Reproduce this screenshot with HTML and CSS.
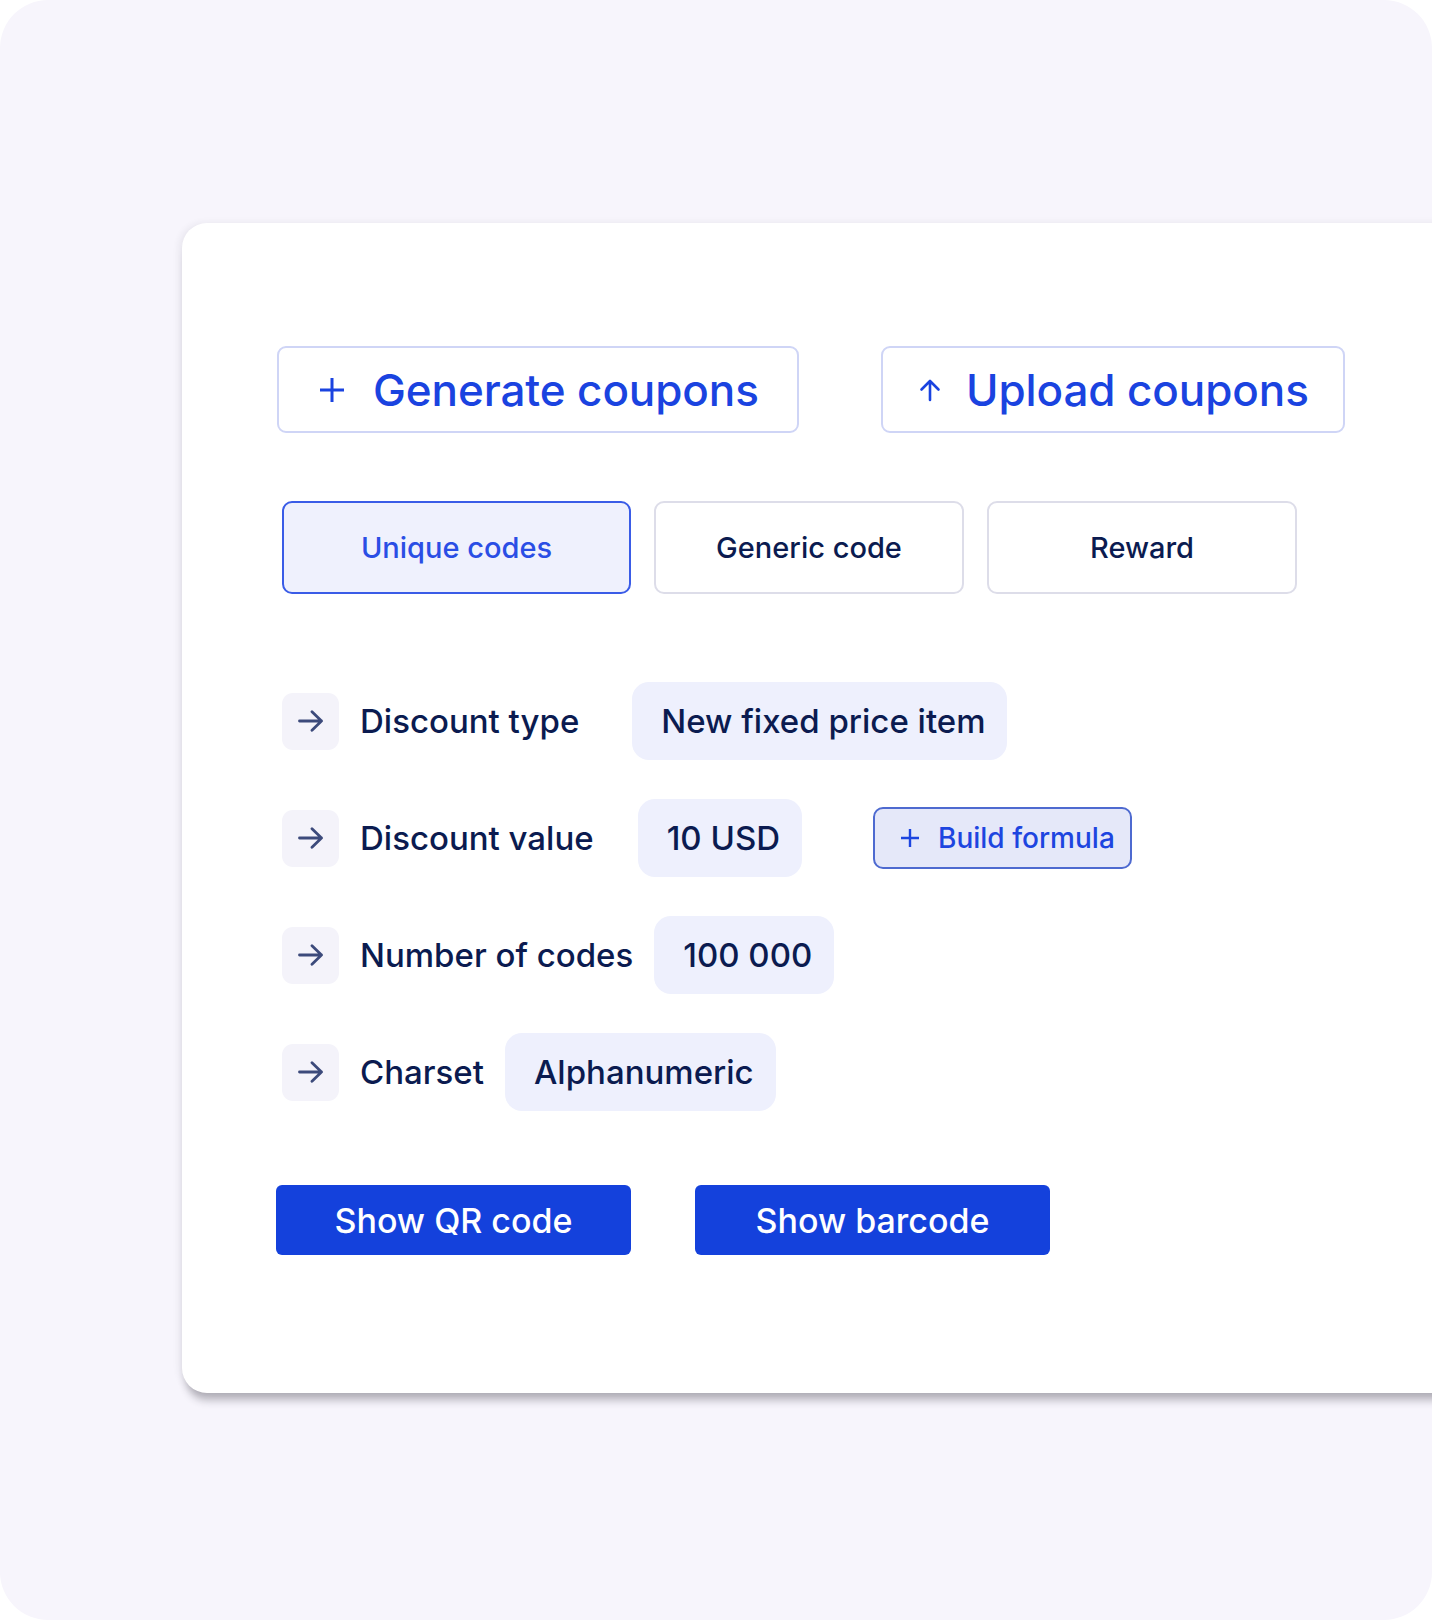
FILE: index.html
```html
<!DOCTYPE html>
<html lang="en">
<head>
<meta charset="utf-8">
<title>Coupons</title>
<link rel="stylesheet" href="styles.css">
</head>
<body>
<div class="frame">
  <div class="card">
    <div class="actions">
      <button class="outline-btn btn-generate">
        <svg class="ico-plus" viewBox="0 0 28 28" width="28" height="28"><path d="M14 2v24M2 14h24" stroke="currentColor" stroke-width="3" fill="none"/></svg>
        <span>Generate coupons</span>
      </button>
      <button class="outline-btn btn-upload">
        <svg class="ico-up" viewBox="0 0 24 24" width="24" height="24"><path d="M12 22V3M3.5 11.5L12 3l8.5 8.5" stroke="currentColor" stroke-width="2.6" fill="none" stroke-linecap="round" stroke-linejoin="round"/></svg>
        <span>Upload coupons</span>
      </button>
    </div>

    <div class="tabs">
      <div class="tab tab-active tab-wide">Unique codes</div>
      <div class="tab">Generic code</div>
      <div class="tab">Reward</div>
    </div>

    <div class="rows">
      <div class="row">
        <span class="arrow-box"><svg viewBox="0 0 26 22" width="26" height="22"><path d="M1.5 11h22M14 1.8l9.5 9.2L14 20.2" stroke="currentColor" stroke-width="2.8" fill="none" stroke-linecap="round" stroke-linejoin="round"/></svg></span>
        <span class="label">Discount type</span>
        <span class="pill gap-a">New fixed price item</span>
      </div>
      <div class="row">
        <span class="arrow-box"><svg viewBox="0 0 26 22" width="26" height="22"><path d="M1.5 11h22M14 1.8l9.5 9.2L14 20.2" stroke="currentColor" stroke-width="2.8" fill="none" stroke-linecap="round" stroke-linejoin="round"/></svg></span>
        <span class="label">Discount value</span>
        <span class="pill gap-b">10 USD</span>
        <button class="formula-btn">
          <svg viewBox="0 0 20 20" width="20" height="20"><path d="M10 1v18M1 10h18" stroke="currentColor" stroke-width="2.4" fill="none"/></svg>
          <span>Build formula</span>
        </button>
      </div>
      <div class="row">
        <span class="arrow-box"><svg viewBox="0 0 26 22" width="26" height="22"><path d="M1.5 11h22M14 1.8l9.5 9.2L14 20.2" stroke="currentColor" stroke-width="2.8" fill="none" stroke-linecap="round" stroke-linejoin="round"/></svg></span>
        <span class="label">Number of codes</span>
        <span class="pill gap-c">100 000</span>
      </div>
      <div class="row">
        <span class="arrow-box"><svg viewBox="0 0 26 22" width="26" height="22"><path d="M1.5 11h22M14 1.8l9.5 9.2L14 20.2" stroke="currentColor" stroke-width="2.8" fill="none" stroke-linecap="round" stroke-linejoin="round"/></svg></span>
        <span class="label">Charset</span>
        <span class="pill gap-c">Alphanumeric</span>
      </div>
    </div>

    <div class="bottom">
      <button class="solid-btn">Show QR code</button>
      <button class="solid-btn">Show barcode</button>
    </div>
  </div>
</div>
</body>
</html>
```

FILE: styles.css
```css
* { box-sizing: border-box; }
html, body { margin: 0; padding: 0; background: #ffffff; }
body { font-family: Inter, "Noto Sans", sans-serif; }

.frame {
  width: 1432px;
  height: 1620px;
  background: #f7f5fc;
  border-radius: 48px;
  overflow: hidden;
  padding: 223px 0 0 182px;
}

.card {
  width: 1300px;
  height: 1170px;
  background: #ffffff;
  border-radius: 25px 0 0 25px;
  box-shadow: 0 12px 9px -5px rgba(40, 36, 50, 0.32), -3px 0 7px rgba(40, 36, 60, 0.07);
  padding: 123px 0 0 95px;
}

button { font-family: inherit; cursor: pointer; }

.actions { display: flex; gap: 82px; }

.outline-btn {
  height: 87px;
  border: 2px solid #cfd5f6;
  border-radius: 9px;
  background: #ffffff;
  color: #1a43e0;
  font-size: 44px;
  font-weight: 500;
  display: flex;
  align-items: center;
  padding: 0;
  letter-spacing: -0.1px;
}
.btn-generate { width: 522px; padding-left: 39px; gap: 27px; }
.btn-upload { width: 464px; padding-left: 35px; gap: 24px; }
.ico-plus { width: 28px; height: 28px; }
.ico-up { width: 24px; height: 24px; }

.tabs { display: flex; gap: 23px; margin: 68px 0 0 5px; }
.tab {
  width: 310px;
  height: 93px;
  border: 2px solid #dddde9;
  border-radius: 10px;
  display: flex;
  align-items: center;
  justify-content: center;
  font-size: 29px;
  font-weight: 500;
  color: #0b1b50;
}
.tab-wide { width: 349px; }
.tab-active {
  background: #eff1fd;
  border-color: #3a5ce7;
  color: #2a4ee5;
}

.rows { display: flex; flex-direction: column; gap: 39px; margin: 88px 0 0 5px; }
.row { display: flex; align-items: center; height: 78px; }

.arrow-box {
  width: 57px;
  height: 57px;
  background: #f4f3fa;
  border-radius: 11px;
  display: flex;
  align-items: center;
  justify-content: center;
  color: #3c4a7b;
  flex: none;
}
.label {
  margin-left: 21px;
  font-size: 33px;
  font-weight: 500;
  color: #0b1b50;
  white-space: nowrap;
}
.pill {
  height: 78px;
  background: #eef0fd;
  border-radius: 17px;
  display: flex;
  align-items: center;
  padding: 0 22px 0 29px;
  font-size: 33px;
  font-weight: 500;
  color: #0b1b50;
  white-space: nowrap;
}
.gap-a { margin-left: 53px; }
.gap-b { margin-left: 44px; }
.gap-c { margin-left: 21px; }

.formula-btn {
  margin-left: 71px;
  height: 62px;
  width: 259px;
  border: 2px solid #4e6ad0;
  border-radius: 10px;
  background: #e5e8f9;
  color: #1d45e0;
  font-size: 28px;
  font-weight: 500;
  display: flex;
  align-items: center;
  gap: 18px;
  padding: 0 0 0 25px;
}

.bottom { display: flex; gap: 64px; margin-top: 74px; margin-left: -1px; }
.solid-btn {
  width: 355px;
  height: 70px;
  border: none;
  border-radius: 6px;
  background: #1441dc;
  color: #ffffff;
  font-size: 34px;
  font-weight: 500;
  padding: 0;
}
```
